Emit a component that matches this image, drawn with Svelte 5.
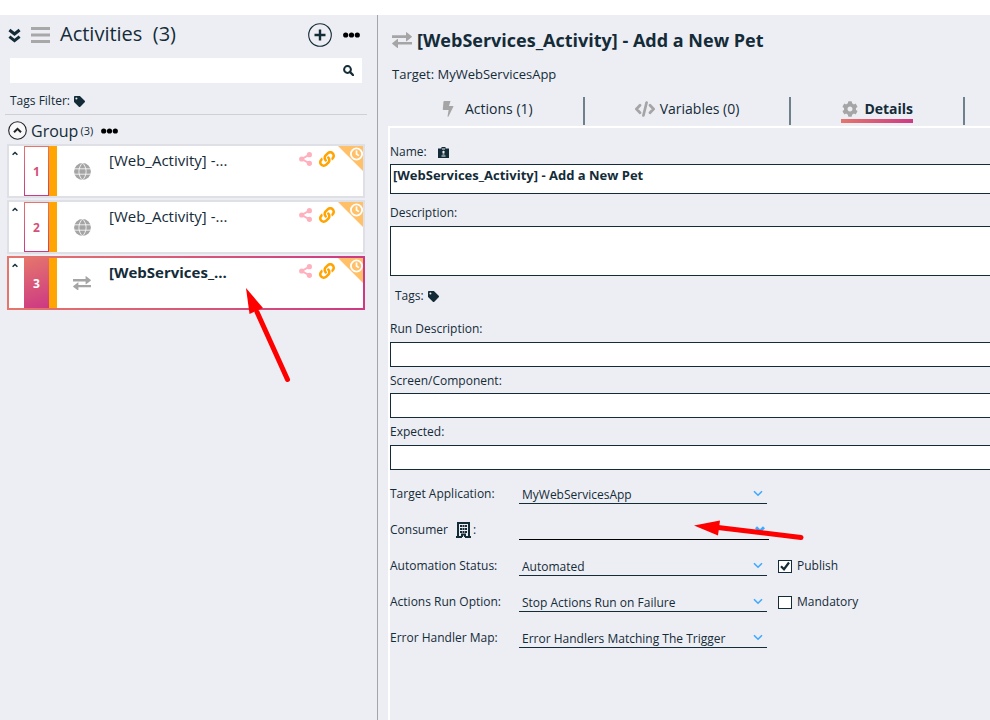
<script>
  const activities = [
    { no: 1, name: '[Web_Activity] -...', kind: 'web' },
    { no: 2, name: '[Web_Activity] -...', kind: 'web' },
    { no: 3, name: '[WebServices_...', kind: 'service' }
  ];
  let selected = $state(3);
  let name = $state('[WebServices_Activity] - Add a New Pet');
  let tab = $state('Details');
  let search = $state('');
  let publish = $state(true);
  let mandatory = $state(false);
</script>

{#snippet swap(size)}
  <svg class="muted" width={size} height={size * 0.8} viewBox="0 0 20 16" aria-hidden="true">
    <path d="M0 3.300h14V.4q0-.6.6-.2l5 4q.6.5 0 1l-5 4q-.6.3-.6-.3V6H0zM20 10H6V7.300q0-.6-.6-.2l-5 4q-.6.5 0 1l5 3.800q.6.4.6-.2v-3.200h14z" />
  </svg>
{/snippet}

{#snippet tag()}
  <svg width="11" height="11" viewBox="0 0 512 512" aria-hidden="true">
    <path fill="currentColor" d="M0 252V48C0 21 21 0 48 0h204c13 0 25 5 34 14l212 212c19 19 19 49 0 68L294 498c-19 19-49 19-68 0L14 286c-9-9-14-21-14-34zM112 64a48 48 0 1 0 0 96 48 48 0 0 0 0-96z" />
  </svg>
{/snippet}

{#snippet dots()}
  <svg width="17" height="6" viewBox="0 0 17 6" aria-hidden="true">
    <circle cx="2.7" cy="3" r="2.6" /><circle cx="8.5" cy="3" r="2.6" /><circle cx="14.3" cy="3" r="2.6" />
  </svg>
{/snippet}

{#snippet picker(id, value, bold)}
  <div class="picker" class:bold>
    <select {id}><option>{value}</option></select>
    <svg width="10" height="7" viewBox="0 0 10 7" aria-hidden="true">
      <path d="M1 1.2 5 5.2 9 1.2" />
    </svg>
  </div>
{/snippet}

<div class="app">
  <aside>
    <header class="side-head">
      <button aria-label="Collapse all">
        <svg width="13" height="15" viewBox="0 0 13 15" aria-hidden="true">
          <path class="line" d="M1.4 2 6.5 6 11.6 2M1.4 8.6 6.5 12.6 11.6 8.6" stroke-width="3.1" />
        </svg>
      </button>
      <svg class="menu" width="19" height="16" viewBox="0 0 19 16" aria-hidden="true">
        <path d="M0 1.500h19M0 8h19M0 14.500h19" stroke="#a8a8a8" stroke-width="2.900" />
      </svg>
      <h2>Activities&nbsp; (3)</h2>
      <button aria-label="Add activity">
        <svg width="24" height="24" viewBox="0 0 24 24" aria-hidden="true">
          <circle cx="12" cy="12" r="11.3" fill="none" stroke="#142b38" stroke-width="1.1" />
          <path d="M12 6.5v11M6.500 12h11" stroke="#142b38" stroke-width="2.4" />
        </svg>
      </button>
      <button aria-label="More">{@render dots()}</button>
    </header>

    <div class="search">
      <input type="text" aria-label="Search activities" bind:value={search} />
      <svg width="11" height="11" viewBox="0 0 11 11" aria-hidden="true">
        <circle cx="4.500" cy="4.500" r="3.400" fill="none" stroke="#142b38" stroke-width="2" />
        <path d="M7 7l3 3" stroke="#142b38" stroke-width="2.400" stroke-linecap="round" />
      </svg>
    </div>

    <div class="filter">Tags Filter: {@render tag()}</div>

    <section>
      <div class="group">
        <button aria-label="Collapse group">
          <svg width="19" height="19" viewBox="0 0 19 19" aria-hidden="true">
            <circle cx="9.5" cy="9.5" r="8.8" fill="#f8f8fb" stroke="#222" stroke-width="1.1" />
            <path d="M6 11.200 9.500 7.800 13 11.200" fill="none" stroke="#222" stroke-width="2" />
          </svg>
        </button>
        <h3>Group</h3><small>(3)</small>
        <button class="more" aria-label="Group options">{@render dots()}</button>
      </div>

      <ul>
        {#each activities as a}
          <li class:selected={selected === a.no}>
            <svg class="caret" width="6" height="5" viewBox="0 0 6 5" aria-hidden="true">
              <path class="line" d="M.6 3.800 3 1.400 5.400 3.800" stroke-width="1.400" />
            </svg>
            <span class="num"><span>{a.no}</span></span>
            <span class="kind">
              {#if a.kind === 'web'}
                <svg width="17" height="17" viewBox="0 0 17 17" aria-hidden="true">
                  <circle cx="8.5" cy="8.5" r="8.4" fill="#a5a5a5" />
                  <path d="M0 5.800h17M0 11.200h17M8.500 0C3.700 4.500 3.700 12.500 8.500 17M8.500 0c4.800 4.500 4.800 12.500 0 17" fill="none" stroke="#fff" stroke-width=".8" />
                </svg>
              {:else}
                {@render swap(18)}
              {/if}
            </span>
            <button class="name" onclick={() => (selected = a.no)}>{a.name}</button>
            <span class="badges">
              <svg width="13" height="14" viewBox="0 0 13 14" aria-hidden="true">
                <path d="M10.500 2.700 2.700 7l7.800 4.300" fill="none" stroke="#ffb0bd" stroke-width="1.900" />
                <g fill="#ffb0bd"><circle cx="10.4" cy="2.700" r="2.600" /><circle cx="2.700" cy="7" r="2.600" /><circle cx="10.4" cy="11.300" r="2.600" /></g>
              </svg>
              <svg width="16" height="16" viewBox="0 0 512 512" aria-hidden="true">
                <path fill="#ffa400" d="M326.612 185.391c59.747 59.809 58.927 155.698.36 214.59-.11.12-.24.25-.36.37l-67.2 67.2c-59.27 59.27-155.699 59.262-214.96 0-59.27-59.26-59.27-155.7 0-214.96l37.106-37.106c9.84-9.84 26.786-3.3 27.294 10.606.648 17.722 3.826 35.527 9.69 52.721 1.986 5.822.567 12.262-3.783 16.612l-13.087 13.087c-28.026 28.026-28.905 73.66-1.155 101.96 28.024 28.579 74.086 28.749 102.325.51l67.2-67.19c28.191-28.191 28.073-73.757 0-101.83-3.701-3.694-7.429-6.564-10.341-8.569a16.037 16.037 0 0 1-6.947-12.606c-.396-10.567 3.348-21.456 11.698-29.806l21.054-21.055c5.521-5.521 14.182-6.199 20.584-1.731a152.482 152.482 0 0 1 20.522 17.197zM467.547 44.449c-59.261-59.262-155.69-59.27-214.96 0l-67.2 67.2c-.12.12-.25.25-.36.37-58.566 58.892-59.387 154.781.36 214.59a152.454 152.454 0 0 0 20.521 17.196c6.402 4.468 15.064 3.789 20.584-1.731l21.054-21.055c8.35-8.35 12.094-19.239 11.698-29.806a16.037 16.037 0 0 0-6.947-12.606c-2.912-2.005-6.64-4.875-10.341-8.569-28.073-28.073-28.191-73.639 0-101.83l67.2-67.19c28.239-28.239 74.3-28.069 102.325.51 27.75 28.3 26.872 73.934-1.155 101.96l-13.087 13.087c-4.35 4.35-5.769 10.79-3.783 16.612 5.864 17.194 9.042 34.999 9.69 52.721.509 13.906 17.454 20.446 27.294 10.606l37.106-37.106c59.271-59.259 59.271-155.699.001-214.959z" />
              </svg>
            </span>
            <svg class="corner" width="25" height="25" viewBox="0 0 25 25" aria-hidden="true">
              <path d="M0 0h25v25z" fill="#ffc068" />
              <circle cx="18.500" cy="8" r="5.600" fill="none" stroke="#fff" stroke-width="1.800" />
              <path d="M18.500 4.500V8l2.400 1.600" fill="none" stroke="#fff" stroke-width="1.700" />
            </svg>
          </li>
        {/each}
      </ul>
    </section>
    <svg class="pointer first" width="50" height="100" viewBox="0 0 50 100" aria-hidden="true">
      <path d="M12 26 42.500 93.500" stroke="red" stroke-width="5" stroke-linecap="round" /><path d="M1 2 18 22 4.500 28z" fill="red" />
    </svg>
  </aside>

  <main>
    <div class="title">{@render swap(20)}<h1>[WebServices_Activity] - Add a New Pet</h1></div>
    <p class="target">Target: MyWebServicesApp</p>

    <nav>
      <div class="tab">
        <button onclick={() => (tab = 'Actions')} class:active={tab === 'Actions'}>
          <svg class="muted" width="18" height="16" viewBox="0 0 18 16" aria-hidden="true">
            <path d="M2 0h6.500L7 5h4Q11.800 5 11.300 5.800L6.500 15.500Q5.500 16.300 5.600 15L6.600 9H1.400Q.6 9 .8 8L1.500.6Q1.600 0 2 0z" />
          </svg>
          Actions (1)
        </button>
      </div>
      <div class="tab">
        <button onclick={() => (tab = 'Variables')} class:active={tab === 'Variables'}>
          <svg width="20" height="16" viewBox="0 0 20 16" fill="none" stroke="#a5a5a5" stroke-width="2.700" stroke-linecap="round" aria-hidden="true">
            <path d="M5 4.300 1.500 8 5 11.700M15 4.300 18.500 8 15 11.700M11.600 1.500 8.400 14.500" />
          </svg>
          Variables (0)
        </button>
      </div>
      <div class="tab">
        <button onclick={() => (tab = 'Details')} class:active={tab === 'Details'}>
          <svg class="muted" width="18" height="16" viewBox="0 0 512 512" aria-hidden="true">
            <path d="M487.4 315.7l-42.6-24.6c4.3-23.2 4.3-47 0-70.2l42.6-24.6c4.9-2.8 7.1-8.6 5.5-14-11.1-35.6-30-67.8-54.7-94.6-3.8-4.1-10-5.1-14.8-2.3L380.800 110c-17.900-15.400-38.500-27.300-60.800-35.100V25.800c0-5.600-3.900-10.500-9.400-11.700-36.700-8.200-74.300-7.800-109.200 0-5.500 1.200-9.400 6.100-9.400 11.700V75c-22.200 7.900-42.800 19.800-60.800 35.100L88.700 85.500c-4.900-2.800-11-1.900-14.800 2.300-24.700 26.700-43.600 58.900-54.700 94.600-1.700 5.400.6 11.200 5.500 14L67.300 221c-4.300 23.200-4.300 47 0 70.200l-42.600 24.600c-4.900 2.800-7.100 8.600-5.500 14 11.100 35.600 30 67.800 54.700 94.600 3.800 4.100 10 5.100 14.800 2.300l42.600-24.600c17.900 15.400 38.500 27.300 60.800 35.100v49.200c0 5.600 3.900 10.500 9.400 11.700 36.700 8.200 74.300 7.800 109.200 0 5.500-1.200 9.400-6.100 9.400-11.700v-49.200c22.200-7.900 42.800-19.800 60.800-35.100l42.600 24.600c4.900 2.800 11 1.900 14.800-2.300 24.700-26.700 43.600-58.900 54.700-94.600 1.500-5.500-.7-11.300-5.600-14.100zM256 336c-44.100 0-80-35.900-80-80s35.900-80 80-80 80 35.900 80 80-35.900 80-80 80z" />
          </svg>
          Details
        </button>
      </div>
    </nav>

    <form class="panel">
      <label for="name">Name:
        <svg class="id" width="11" height="11" viewBox="0 0 11 11" aria-hidden="true">
          <path d="M0 1.500h3.500V0h4v1.500H11V11H0z" fill="#142b38" />
          <path d="M4 2h3M3.500 9h4M4.500 7h2" stroke="#edeef4" />
          <circle cx="5.5" cy="5" r="1.200" fill="#edeef4" />
        </svg>
      </label>
      <input id="name" class="tall" type="text" bind:value={name} />
      <label for="desc" class="spaced">Description:</label>
      <textarea id="desc"></textarea>
      <div class="tags">Tags: {@render tag()}</div>
      <label for="run" class="after-tags">Run Description:</label>
      <input id="run" type="text" />
      <label for="screen">Screen/Component:</label>
      <input id="screen" type="text" />
      <label for="expected" class="last">Expected:</label>
      <input id="expected" type="text" />

      <div class="rows">
        <div class="row">
          <label for="app-target">Target Application:</label>
          {@render picker('app-target', 'MyWebServicesApp', false)}
        </div>
        <div class="row">
          <label for="consumer">Consumer
            <svg class="building" width="15" height="16" viewBox="0 0 15 16" aria-hidden="true">
              <path d="M1 1h13M2 1v14M13 1v14M0 15h6M9 15h6M6 15v-2.500h3V15" fill="none" stroke="#142b38" stroke-width="2" />
              <path d="M4 4h2M6.500 4h2M9 4h2M4 7h2M6.500 7h2M9 7h2M4 10h2M6.500 10h2M9 10h2" stroke="#142b38" stroke-width="2" />
            </svg>:
          </label>
          {@render picker('consumer', '', true)}
        </div>
        <div class="row">
          <label for="status">Automation Status:</label>
          {@render picker('status', 'Automated', false)}
          <label class="check"><input type="checkbox" bind:checked={publish} />
            <span class="box"><svg width="10" height="10" viewBox="0 0 10 10" aria-hidden="true"><path class="line" d="M1 5.200 4 8.200 9 1.500" stroke-width="2.200" /></svg></span>
            Publish</label>
        </div>
        <div class="row">
          <label for="option">Actions Run Option:</label>
          {@render picker('option', 'Stop Actions Run on Failure', false)}
          <label class="check"><input type="checkbox" bind:checked={mandatory} />
            <span class="box"><svg width="10" height="10" viewBox="0 0 10 10" aria-hidden="true"><path class="line" d="M1 5.200 4 8.200 9 1.500" stroke-width="2.200" /></svg></span>
            Mandatory</label>
        </div>
        <div class="row">
          <label for="errors">Error Handler Map:</label>
          {@render picker('errors', 'Error Handlers Matching The Trigger', false)}
        </div>
      </div>
      <svg class="pointer second" width="112" height="30" viewBox="0 0 112 30" aria-hidden="true">
        <path d="M24 8.500 107 18.500" stroke="red" stroke-width="5" stroke-linecap="round" /><path d="M0 6.500 26 1.500 24 16.500z" fill="red" />
      </svg>
    </form>
  </main>
</div>

<style>
  :global(body) { background: #fff; }
  .app {
    display: flex;
    box-sizing: border-box;
    min-height: 100vh;
    padding-top: 15px;
    font: 12px/16px "Open Sans", sans-serif;
    color: #142b38;
  }
  .app * { box-sizing: border-box; }
  button { padding: 0; border: 0; background: none; font: inherit; color: inherit; cursor: pointer; }
  svg { display: block; flex: none; }
  h1, h2, h3, p, ul { margin: 0; padding: 0; }
  .muted { fill: #a5a5a5; }
  .line { fill: none; stroke: #142b38; }

  aside {
    position: relative;
    flex: none;
    width: 378px;
    background: #edeef4;
    border-right: 1px solid #a3a5ab;
  }
  .side-head { display: flex; align-items: center; height: 40px; padding: 0 17px 0 8px; }
  .menu { margin-left: 10px; }
  h2 { flex: 1; margin-left: 10px; padding-bottom: 2px; font-size: 20px; font-weight: 400; line-height: 28px; }
  .side-head button + button { margin-left: 11px; }
  .search { position: relative; margin: 3px 15px 0 10px; }
  .search input { display: block; width: 100%; height: 25px; padding: 0 30px 0 6px; border: 0; background: #fff; font: inherit; }
  .search svg { position: absolute; right: 8px; top: 7px; }
  .filter { display: flex; align-items: center; gap: 4px; height: 32px; margin: 0 10px 0 5px; padding: 5px 0 0 5px; border-bottom: 1px solid #cfd0d5; }
  .group { display: flex; align-items: center; height: 29px; padding: 2px 0 0 8px; }
  h3 { margin-left: 4px; font-size: 16px; font-weight: 400; line-height: 22px; }
  small { margin-left: 2px; padding-top: 1px; font-size: 11px; }
  .more { margin-left: 8px; }
  ul { display: flex; flex-direction: column; gap: 2px; margin: 0 12px 0 7px; list-style: none; }
  li { position: relative; display: flex; height: 54px; border: 2px solid #dfe0e6; background: #fff; }
  li.selected { border-image: linear-gradient(to right, #e5766c, #cc3a83) 1; }
  .caret { margin: 5px 6px 0 3px; }
  .num {
    display: flex; align-items: center;
    width: 33px; padding-left: 1px;
    background: linear-gradient(to right, transparent 25px, #ffa400 25px), linear-gradient(#e5766c, #c93b86);
    font-weight: 700; color: #d5507a;
  }
  .num span { display: flex; align-items: center; justify-content: center; width: 23px; height: 48px; padding-top: 2px; background: #fff; }
  .selected .num { color: #fff; background: linear-gradient(to right, transparent 25px, #ffa400 25px), linear-gradient(160deg, #e5766c, #cb3585); }
  .selected .num span { background: none; }
  .kind { display: flex; align-items: center; justify-content: center; width: 50px; }
  .name { flex: 1; align-self: flex-start; margin: 4px 0 0 2px; text-align: left; font-size: 15px; line-height: 20px; }
  .selected .name { font-weight: 700; }
  .badges { display: flex; align-items: center; gap: 7px; align-self: flex-start; margin: 5px 28px 0 0; }
  .corner { position: absolute; top: 0; right: 0; }
  .pointer { position: absolute; pointer-events: none; fill: none; }
  .first { left: 245px; top: 271px; }
  .second { left: 304px; top: 391px; }

  main { flex: 1; min-width: 0; display: flex; flex-direction: column; background: #edeef4; overflow: hidden; }
  .title { display: flex; align-items: center; gap: 5px; margin: 12px 0 0 14px; }
  h1 { font-size: 18px; line-height: 26px; font-weight: 700; white-space: nowrap; }
  .target { margin: 12px 0 0 14px; font-size: 13px; line-height: 18px; }
  nav { display: flex; margin: 14px 0 1px 14px; }
  .tab { display: flex; height: 28px; padding: 0 50px; border-right: 2px solid #70808a; }
  .tab button { display: flex; align-items: center; gap: 5px; height: 26px; border-bottom: 4px solid transparent; padding-top: 2px; font-size: 14px; white-space: nowrap; }
  .tab .active { border-image: linear-gradient(to right, #e5766c, #cc3a83) 1; font-weight: 700; }

  .panel { position: relative; flex: 1; margin-left: 10px; border: solid #fff; border-width: 2px 0 0 2px; padding-top: 12px; }
  .panel > label { display: flex; align-items: center; height: 26px; padding-top: 1px; line-height: 16px; }
  .panel > label:first-child { height: 24px; padding: 0; }
  .panel > label.spaced { height: 32px; padding-top: 6px; }
  .panel > label.after-tags { height: 27px; margin-top: 11px; }
  .panel > label.last { height: 27px; }
  .id { margin-left: 11px; }
  .panel > input, textarea {
    display: block; width: 100%; height: 25px; margin: 0; padding: 0 3px;
    border: 1px solid #142b38; border-right: 0; border-radius: 0;
    background: #fff; font: inherit; color: inherit; resize: none; outline: 0;
  }
  .panel > input.tall { height: 30px; padding: 0 2px 8px; font-size: 13px; font-weight: 700; }
  textarea { height: 50px; }
  .tags { display: flex; align-items: center; gap: 4px; height: 28px; padding: 12px 0 0 5px; }

  .rows { padding-top: 5px; }
  .row { display: flex; align-items: center; height: 36px; }
  .row > label { padding-top: 2px; }
  .row > label:first-child { display: flex; align-items: center; width: 129px; }
  .building { margin: 0 2px 0 8px; }
  .picker { position: relative; width: 248px; align-self: stretch; padding-top: 10px; }
  select {
    display: block; width: 100%; height: 19px; padding: 2px 20px 0 3px;
    border: 0; border-bottom: 1px solid #142b38; border-radius: 0; appearance: none;
    background: none; font: inherit; color: inherit; outline: 0;
  }
  .picker svg { position: absolute; right: 4px; top: 15px; fill: none; stroke: #3fa9ff; stroke-width: 1.600; pointer-events: none; }
  .picker.bold { width: 250px; }
  .bold select { border-color: #000; }
  .bold svg { stroke-width: 3; }
  .check { position: relative; display: flex; align-items: center; gap: 5px; margin-left: 11px; }
  .check input { position: absolute; width: 14px; height: 14px; margin: 0; opacity: 0; }
  .box { display: flex; align-items: center; justify-content: center; width: 14px; height: 13px; border: 1px solid #142b38; background: #fff; }
  .box svg { visibility: hidden; }
  .check input:checked + .box svg { visibility: visible; }
</style>
